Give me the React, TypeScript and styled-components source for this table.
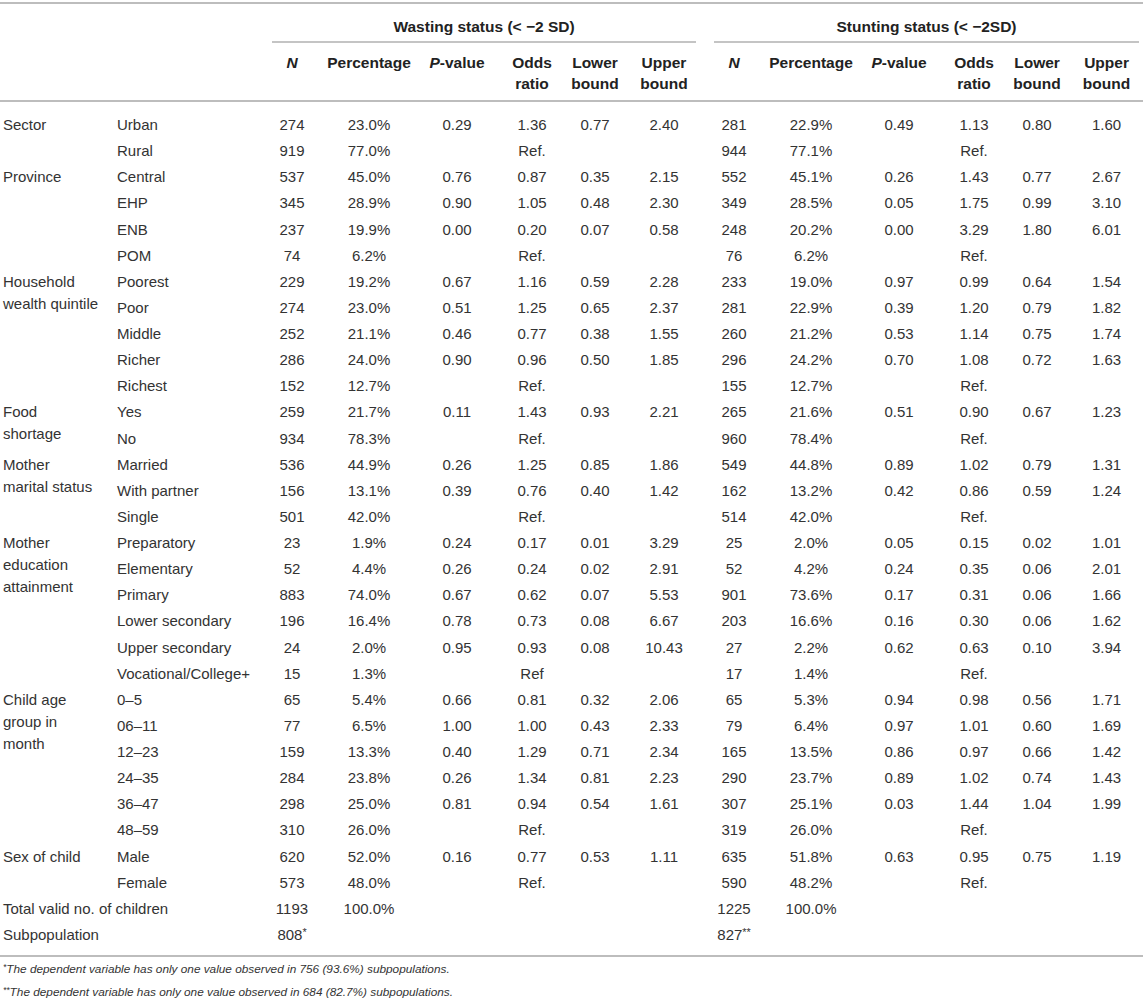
import React from "react";
import styled, { createGlobalStyle } from "styled-components";

const GlobalStyle = createGlobalStyle`
  html, body { margin: 0; padding: 0; background: #ffffff; }
  body { font-family: "Liberation Sans", Arial, Helvetica, sans-serif; color: #333333; }
`;

const Page = styled.div`
  width: 1143px;
  padding-top: 2px;
`;

const Table = styled.table`
  width: 1143px;
  border-collapse: collapse;
  table-layout: fixed;
  font-size: 15px;
`;

const Col = styled.col<{ $w: number }>`
  width: ${(p) => p.$w}px;
`;

const Head = styled.thead`
  border-top: 2px solid #bdbdbd;
`;

const GroupRow = styled.tr``;

const SubRow = styled.tr`
  border-bottom: 2px solid #bdbdbd;
`;

const BlankTh = styled.th`
  padding: 0;
`;

const GroupTh = styled.th`
  padding: 0;
  font-weight: bold;
  font-size: 15.5px;
  color: #222222;
`;

const GroupLabel = styled.div`
  margin: 0 4px 0 14px;
  padding: 12px 0 3px;
  line-height: 22px;
  text-align: center;
  border-bottom: 2px solid #c4c4c4;
  white-space: nowrap;
`;

const SubTh = styled.th`
  padding: 9px 0 6px;
  vertical-align: top;
  text-align: center;
  line-height: 21px;
  font-weight: bold;
  font-size: 15.5px;
  color: #222222;
  white-space: nowrap;
`;

const Em = styled.i`
  font-style: italic;
`;

const Body = styled.tbody`
  border-bottom: 2px solid #bdbdbd;
  & > tr:first-child > td {
    padding-top: 12px;
  }
  & > tr:last-child > td {
    padding-bottom: 9px;
  }
`;

const Row = styled.tr``;

const CatTd = styled.td`
  padding: 2px 4px 2px 3px;
  vertical-align: top;
  text-align: left;
  line-height: 22px;
  white-space: nowrap;
`;

const NameTd = styled.td`
  padding: 2px 0 2.13px 4px;
  text-align: left;
  line-height: 22px;
  white-space: nowrap;
`;

const TotalTd = styled.td`
  padding: 2px 0 2.13px 3px;
  text-align: left;
  line-height: 22px;
  white-space: nowrap;
`;

const NumTd = styled.td`
  padding: 2px 0 2.13px;
  text-align: center;
  line-height: 22px;
  white-space: nowrap;
`;

const Star = styled.span`
  font-size: 0.72em;
  line-height: 0;
  vertical-align: 0.35em;
`;

const Notes = styled.div`
  padding: 1px 0 0 3px;
`;

const Note = styled.p`
  margin: 0;
  font-size: 11.8px;
  line-height: 23px;
  font-style: italic;
  color: #333333;
`;

type Entry = { name: string; w: string[]; s: string[] };
type Group = { label: string[]; rows: Entry[] };

const ref = (n: string, p: string, mark = "Ref."): string[] => [n, p, "", mark, "", ""];

const groups: Group[] = [
  {
    label: ["Sector"],
    rows: [
      { name: "Urban", w: ["274", "23.0%", "0.29", "1.36", "0.77", "2.40"], s: ["281", "22.9%", "0.49", "1.13", "0.80", "1.60"] },
      { name: "Rural", w: ref("919", "77.0%"), s: ref("944", "77.1%") },
    ],
  },
  {
    label: ["Province"],
    rows: [
      { name: "Central", w: ["537", "45.0%", "0.76", "0.87", "0.35", "2.15"], s: ["552", "45.1%", "0.26", "1.43", "0.77", "2.67"] },
      { name: "EHP", w: ["345", "28.9%", "0.90", "1.05", "0.48", "2.30"], s: ["349", "28.5%", "0.05", "1.75", "0.99", "3.10"] },
      { name: "ENB", w: ["237", "19.9%", "0.00", "0.20", "0.07", "0.58"], s: ["248", "20.2%", "0.00", "3.29", "1.80", "6.01"] },
      { name: "POM", w: ref("74", "6.2%"), s: ref("76", "6.2%") },
    ],
  },
  {
    label: ["Household", "wealth quintile"],
    rows: [
      { name: "Poorest", w: ["229", "19.2%", "0.67", "1.16", "0.59", "2.28"], s: ["233", "19.0%", "0.97", "0.99", "0.64", "1.54"] },
      { name: "Poor", w: ["274", "23.0%", "0.51", "1.25", "0.65", "2.37"], s: ["281", "22.9%", "0.39", "1.20", "0.79", "1.82"] },
      { name: "Middle", w: ["252", "21.1%", "0.46", "0.77", "0.38", "1.55"], s: ["260", "21.2%", "0.53", "1.14", "0.75", "1.74"] },
      { name: "Richer", w: ["286", "24.0%", "0.90", "0.96", "0.50", "1.85"], s: ["296", "24.2%", "0.70", "1.08", "0.72", "1.63"] },
      { name: "Richest", w: ref("152", "12.7%"), s: ref("155", "12.7%") },
    ],
  },
  {
    label: ["Food", "shortage"],
    rows: [
      { name: "Yes", w: ["259", "21.7%", "0.11", "1.43", "0.93", "2.21"], s: ["265", "21.6%", "0.51", "0.90", "0.67", "1.23"] },
      { name: "No", w: ref("934", "78.3%"), s: ref("960", "78.4%") },
    ],
  },
  {
    label: ["Mother", "marital status"],
    rows: [
      { name: "Married", w: ["536", "44.9%", "0.26", "1.25", "0.85", "1.86"], s: ["549", "44.8%", "0.89", "1.02", "0.79", "1.31"] },
      { name: "With partner", w: ["156", "13.1%", "0.39", "0.76", "0.40", "1.42"], s: ["162", "13.2%", "0.42", "0.86", "0.59", "1.24"] },
      { name: "Single", w: ref("501", "42.0%"), s: ref("514", "42.0%") },
    ],
  },
  {
    label: ["Mother", "education", "attainment"],
    rows: [
      { name: "Preparatory", w: ["23", "1.9%", "0.24", "0.17", "0.01", "3.29"], s: ["25", "2.0%", "0.05", "0.15", "0.02", "1.01"] },
      { name: "Elementary", w: ["52", "4.4%", "0.26", "0.24", "0.02", "2.91"], s: ["52", "4.2%", "0.24", "0.35", "0.06", "2.01"] },
      { name: "Primary", w: ["883", "74.0%", "0.67", "0.62", "0.07", "5.53"], s: ["901", "73.6%", "0.17", "0.31", "0.06", "1.66"] },
      { name: "Lower secondary", w: ["196", "16.4%", "0.78", "0.73", "0.08", "6.67"], s: ["203", "16.6%", "0.16", "0.30", "0.06", "1.62"] },
      { name: "Upper secondary", w: ["24", "2.0%", "0.95", "0.93", "0.08", "10.43"], s: ["27", "2.2%", "0.62", "0.63", "0.10", "3.94"] },
      { name: "Vocational/College+", w: ref("15", "1.3%", "Ref"), s: ref("17", "1.4%") },
    ],
  },
  {
    label: ["Child age", "group in", "month"],
    rows: [
      { name: "0–5", w: ["65", "5.4%", "0.66", "0.81", "0.32", "2.06"], s: ["65", "5.3%", "0.94", "0.98", "0.56", "1.71"] },
      { name: "06–11", w: ["77", "6.5%", "1.00", "1.00", "0.43", "2.33"], s: ["79", "6.4%", "0.97", "1.01", "0.60", "1.69"] },
      { name: "12–23", w: ["159", "13.3%", "0.40", "1.29", "0.71", "2.34"], s: ["165", "13.5%", "0.86", "0.97", "0.66", "1.42"] },
      { name: "24–35", w: ["284", "23.8%", "0.26", "1.34", "0.81", "2.23"], s: ["290", "23.7%", "0.89", "1.02", "0.74", "1.43"] },
      { name: "36–47", w: ["298", "25.0%", "0.81", "0.94", "0.54", "1.61"], s: ["307", "25.1%", "0.03", "1.44", "1.04", "1.99"] },
      { name: "48–59", w: ref("310", "26.0%"), s: ref("319", "26.0%") },
    ],
  },
  {
    label: ["Sex of child"],
    rows: [
      { name: "Male", w: ["620", "52.0%", "0.16", "0.77", "0.53", "1.11"], s: ["635", "51.8%", "0.63", "0.95", "0.75", "1.19"] },
      { name: "Female", w: ref("573", "48.0%"), s: ref("590", "48.2%") },
    ],
  },
];

const colWidths = [113, 145, 68, 86, 90, 60, 66, 72, 68, 86, 90, 60, 66, 73];

const subHeads: React.ReactNode[] = [
  <Em key="n">N</Em>,
  "Percentage",
  <React.Fragment key="p">
    <Em>P</Em>-value
  </React.Fragment>,
  <React.Fragment key="o">
    Odds
    <br />
    ratio
  </React.Fragment>,
  <React.Fragment key="l">
    Lower
    <br />
    bound
  </React.Fragment>,
  <React.Fragment key="u">
    Upper
    <br />
    bound
  </React.Fragment>,
];

const blanks = (n: number) => Array.from({ length: n }, (_, i) => <NumTd key={`b${i}`} />);

export default function App() {
  return (
    <>
      <GlobalStyle />
      <Page>
        <Table>
          <colgroup>
            {colWidths.map((w, i) => (
              <Col key={i} $w={w} />
            ))}
          </colgroup>
          <Head>
            <GroupRow>
              <BlankTh colSpan={2} rowSpan={2} />
              <GroupTh colSpan={6}>
                <GroupLabel>Wasting status (&lt; −2 SD)</GroupLabel>
              </GroupTh>
              <GroupTh colSpan={6}>
                <GroupLabel>Stunting status (&lt; −2SD)</GroupLabel>
              </GroupTh>
            </GroupRow>
            <SubRow>
              {[0, 1].map((g) =>
                subHeads.map((h, i) => <SubTh key={`${g}-${i}`}>{h}</SubTh>)
              )}
            </SubRow>
          </Head>
          <Body>
            {groups.map((grp) =>
              grp.rows.map((r, ri) => (
                <Row key={`${grp.label.join(" ")}-${r.name}`}>
                  {ri === 0 && (
                    <CatTd rowSpan={grp.rows.length}>
                      {grp.label.map((line, li) => (
                        <React.Fragment key={li}>
                          {li > 0 && <br />}
                          {line}
                        </React.Fragment>
                      ))}
                    </CatTd>
                  )}
                  <NameTd>{r.name}</NameTd>
                  {[...r.w, ...r.s].map((v, i) => (
                    <NumTd key={i}>{v}</NumTd>
                  ))}
                </Row>
              ))
            )}
            <Row>
              <TotalTd colSpan={2}>Total valid no. of children</TotalTd>
              <NumTd>1193</NumTd>
              <NumTd>100.0%</NumTd>
              {blanks(4)}
              <NumTd>1225</NumTd>
              <NumTd>100.0%</NumTd>
              {blanks(4)}
            </Row>
            <Row>
              <TotalTd colSpan={2}>Subpopulation</TotalTd>
              <NumTd>
                808<Star>*</Star>
              </NumTd>
              {blanks(5)}
              <NumTd>
                827<Star>**</Star>
              </NumTd>
              {blanks(5)}
            </Row>
          </Body>
        </Table>
        <Notes>
          <Note>
            <Star>*</Star>The dependent variable has only one value observed in 756 (93.6%) subpopulations.
          </Note>
          <Note>
            <Star>**</Star>The dependent variable has only one value observed in 684 (82.7%) subpopulations.
          </Note>
        </Notes>
      </Page>
    </>
  );
}
